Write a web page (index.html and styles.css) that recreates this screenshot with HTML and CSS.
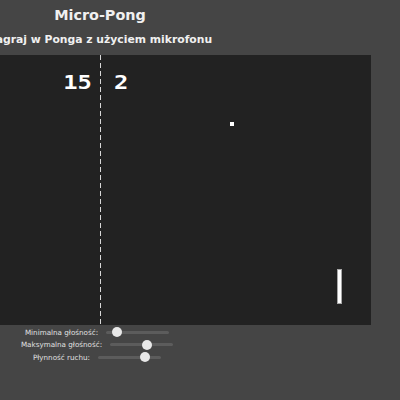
FILE: index.html
```html
<!DOCTYPE html>
<html lang="pl">
<head>
<meta charset="utf-8">
<title>Micro-Pong</title>
<link rel="stylesheet" href="styles.css">
</head>
<body>
<div class="page">
  <h1 class="title">Micro-Pong</h1>
  <p class="subtitle">Zagraj w Ponga z użyciem mikrofonu</p>
  <div class="board">
    <div class="net"></div>
    <div class="score score-left">15</div>
    <div class="score score-right">2</div>
    <div class="ball"></div>
    <div class="paddle"></div>
  </div>
  <div class="controls">
    <label class="row"><span class="label">Minimalna głośność:</span><input class="slider" type="range" min="0" max="100" value="11"></label>
    <label class="row"><span class="label">Maksymalna głośność:</span><input class="slider" type="range" min="0" max="100" value="60"></label>
    <label class="row"><span class="label">Płynność ruchu:</span><input class="slider" type="range" min="0" max="100" value="79"></label>
  </div>
</div>
</body>
</html>
```
FILE: styles.css
```css
html, body {
  margin: 0;
  padding: 0;
  background: #454545;
  overflow: hidden;
}

body {
  font-family: "DejaVu Sans", Verdana, sans-serif;
  color: #f0f0f0;
}

.page {
  width: 200px;
  display: flex;
  flex-direction: column;
  align-items: center;
}

.title {
  margin: 7px 0 0;
  font-size: 14.4px;
  font-weight: bold;
  line-height: 17px;
  white-space: nowrap;
}

.subtitle {
  margin: 9px 0 0;
  font-size: 10.8px;
  font-weight: bold;
  line-height: 13px;
  white-space: nowrap;
}

.board {
  position: relative;
  flex: none;
  width: 542px;
  height: 270px;
  margin-top: 9px;
  background: #222222;
}

.net {
  position: absolute;
  left: 271px;
  top: 0;
  width: 1px;
  height: 100%;
  background: repeating-linear-gradient(to bottom, #d8d8d8 0 5px, transparent 5px 8px);
}

.score {
  position: absolute;
  top: 18px;
  font-family: "DejaVu Sans Mono", monospace;
  font-weight: bold;
  font-size: 19px;
  line-height: 19px;
  color: #ffffff;
  white-space: nowrap;
}

.score-left {
  right: 279px;
  transform: scaleX(1.25);
  transform-origin: right center;
}

.score-right {
  left: 285px;
  transform: scaleX(1.25);
  transform-origin: left center;
}

.ball {
  position: absolute;
  left: 401px;
  top: 67px;
  width: 4px;
  height: 4px;
  background: #ffffff;
}

.paddle {
  position: absolute;
  left: 508px;
  top: 214px;
  width: 3px;
  height: 33px;
  background: #ffffff;
  border: 1px solid #a8a8a8;
}

.controls {
  display: flex;
  flex-direction: column;
  align-items: center;
  margin-top: 1px;
}

.row {
  display: flex;
  align-items: center;
  gap: 8px;
  height: 12.5px;
  padding-right: 6px;
  white-space: nowrap;
}

.label {
  font-size: 7.2px;
  color: #e0e0e0;
}

.slider {
  -webkit-appearance: none;
  appearance: none;
  width: 63px;
  height: 10px;
  margin: 0;
  padding: 0;
  background: transparent;
}

.slider::-webkit-slider-runnable-track {
  height: 3px;
  border-radius: 2px;
  background: #5c5c5c;
}

.slider::-webkit-slider-thumb {
  -webkit-appearance: none;
  appearance: none;
  width: 10px;
  height: 10px;
  margin-top: -3.5px;
  border-radius: 50%;
  background: #e8e8e8;
  border: none;
}
```
